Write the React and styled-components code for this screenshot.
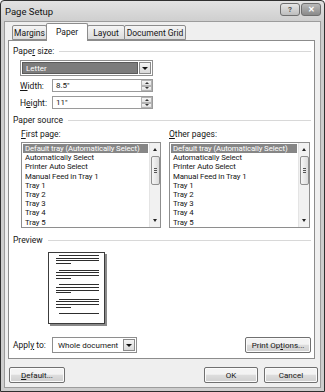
import React from 'react';
import styled, { createGlobalStyle } from 'styled-components';

const GlobalStyle = createGlobalStyle`
  html, body { margin: 0; padding: 0; background: #fff; }
  body {
    font-family: Roboto, "Liberation Sans", sans-serif;
    font-size: 8px;
    color: #151515;
  }
  * { box-sizing: border-box; }
`;

const Window = styled.div`
  width: 325px;
  height: 392px;
  border: 1px solid #2f2f2f;
  border-radius: 4px 4px 0 0;
  background: linear-gradient(#e2e2e2, #cdcdcd 22px, #cdcdcd);
  display: flex;
  flex-direction: column;
`;

const TitleBar = styled.div`
  height: 20px;
  display: flex;
  align-items: center;
  justify-content: space-between;
  padding: 0 3px 0 4px;
`;

const Title = styled.span`
  font-size: 9.5px;
  color: #111;
`;

const Caps = styled.div`
  display: flex;
  gap: 1px;
  margin-top: -3px;
`;

const CapBtn = styled.div`
  width: 20px;
  height: 13px;
  border: 1px solid #6f6f6f;
  border-radius: 3px;
  background: ${({ close }) =>
    close ? 'linear-gradient(#b9b9b9, #8a8a8a)' : 'linear-gradient(#e6e6e6, #bdbdbd)'};
  display: flex;
  align-items: center;
  justify-content: center;
  font-size: 8px;
  font-weight: 700;
  color: ${({ close }) => (close ? '#fff' : '#555')};
`;

const Client = styled.div`
  flex: 1;
  margin: 0 3px 3px 3px;
  border: 1px solid #9c9c9c;
  background: #efefef;
  padding: 1px 5px 0 3px;
  display: flex;
  flex-direction: column;
`;

const TabRow = styled.div`
  height: 17px;
  display: flex;
  align-items: flex-end;
  padding-left: 4px;
  position: relative;
  z-index: 1;
`;

const Tab = styled.div`
  width: ${({ w }) => w}px;
  height: ${({ active }) => (active ? 18 : 15)}px;
  margin-bottom: ${({ active }) => (active ? -1 : 0)}px;
  margin-left: ${({ first }) => (first ? 0 : -1)}px;
  border: 1px solid #8c8c8c;
  border-bottom: ${({ active }) => (active ? 'none' : '1px solid #8c8c8c')};
  border-radius: 2px 2px 0 0;
  background: ${({ active }) =>
    active ? '#fff' : 'linear-gradient(#f5f5f5, #dcdcdc)'};
  display: flex;
  align-items: center;
  justify-content: center;
  padding-bottom: ${({ active }) => (active ? 2 : 0)}px;
  font-size: 8.5px;
`;

const Panel = styled.div`
  height: 319px;
  border: 1px solid #8c8c8c;
  background: #fff;
  padding: 5px 3px 0 4px;
  display: flex;
  flex-direction: column;
`;

const SectionHead = styled.div`
  display: flex;
  align-items: center;
  gap: 5px;
  height: 10px;
  margin-top: ${({ mt }) => mt || 0}px;
  font-size: 8.5px;
  &::after {
    content: '';
    flex: 1;
    height: 1px;
    background: #d8d8d8;
  }
`;

const Indent = styled.div`
  padding-left: ${({ pl }) => pl}px;
  display: flex;
  flex-direction: column;
`;

const Combo = styled.div`
  width: ${({ w }) => w}px;
  height: 16px;
  margin-top: ${({ mt }) => mt || 0}px;
  border: 1px solid #8e8e8e;
  background: #fff;
  display: flex;
  padding: 1px;
`;

const ComboValue = styled.div`
  flex: 1;
  min-width: 0;
  display: flex;
  align-items: center;
  padding-left: 3px;
  font-size: 8px;
  white-space: nowrap;
  overflow: hidden;
  background: ${({ selected }) => (selected ? '#7c7c7c' : 'transparent')};
  color: ${({ selected }) => (selected ? '#fff' : '#151515')};
  border: 1px solid ${({ selected }) => (selected ? '#5a5a5a' : 'transparent')};
`;

const DropBtn = styled.div`
  width: 12px;
  margin-left: 1px;
  border: 1px solid #8a8a8a;
  background: linear-gradient(#f4f4f4, #d9d9d9);
  display: flex;
  align-items: center;
  justify-content: center;
  &::after {
    content: '';
    border-left: 3px solid transparent;
    border-right: 3px solid transparent;
    border-top: 3px solid #111;
  }
`;

const FieldRow = styled.div`
  display: flex;
  align-items: center;
  margin-top: ${({ mt }) => mt}px;
  height: 13px;
`;

const FieldLabel = styled.div`
  width: 32px;
  font-size: 8.5px;
`;

const Spin = styled.div`
  width: 101px;
  height: 13px;
  border: 1px solid #9a9a9a;
  display: flex;
  align-items: center;
  justify-content: space-between;
  padding-left: 3px;
  font-size: 8px;
`;

const SpinBtns = styled.div`
  width: 11px;
  height: 11px;
  display: flex;
  flex-direction: column;
`;

const SpinBtn = styled.div`
  flex: 1;
  border: 1px solid #b4b4b4;
  background: linear-gradient(#f6f6f6, #e0e0e0);
  display: flex;
  align-items: center;
  justify-content: center;
  &::after {
    content: '';
    border-left: 2px solid transparent;
    border-right: 2px solid transparent;
    ${({ down }) => (down ? 'border-top' : 'border-bottom')}: 2px solid #333;
  }
`;

const Columns = styled.div`
  display: flex;
  gap: 8px;
  padding-left: 8px;
  margin-top: 4px;
`;

const Column = styled.div`
  width: ${({ w }) => w}px;
  display: flex;
  flex-direction: column;
`;

const ColLabel = styled.div`
  height: 10px;
  font-size: 8.5px;
  display: flex;
  align-items: center;
`;

const ListBox = styled.div`
  height: 86px;
  margin-top: 3px;
  border: 1px solid #8e8e8e;
  display: flex;
  overflow: hidden;
`;

const Items = styled.div`
  flex: 1;
  min-width: 0;
  overflow: hidden;
  padding: 1px 1px 0 1px;
`;

const Item = styled.div`
  height: 9.2px;
  line-height: 9.2px;
  padding-left: 2px;
  font-size: 7.8px;
  letter-spacing: -0.1px;
  white-space: nowrap;
  background: ${({ selected }) => (selected ? '#868686' : 'transparent')};
  color: ${({ selected }) => (selected ? '#fff' : '#151515')};
`;

const ScrollBar = styled.div`
  width: 11px;
  flex: none;
  background: #f1f1f1;
  border-left: 1px solid #e4e4e4;
  display: flex;
  flex-direction: column;
  align-items: center;
  padding: 3px 0;
`;

const Arrow = styled.div`
  width: 0;
  height: 0;
  margin: 2px 0;
  border-left: 2px solid transparent;
  border-right: 2px solid transparent;
  ${({ down }) => (down ? 'border-top' : 'border-bottom')}: 3px solid #222;
`;

const Thumb = styled.div`
  width: 9px;
  height: 29px;
  margin-top: 3px;
  border: 1px solid #8f8f8f;
  border-radius: 2px;
  background: linear-gradient(90deg, #f6f6f6, #dcdcdc);
  display: flex;
  flex-direction: column;
  align-items: center;
  justify-content: center;
  gap: 1px;
  span {
    width: 3px;
    height: 1px;
    background: #555;
  }
`;

const Track = styled.div`
  flex: 1;
`;

const PagePreview = styled.div`
  width: 57px;
  height: 72px;
  margin: 7px 0 0 35px;
  border: 1px solid #3c3c3c;
  background: #fff;
  box-shadow: 2px 2px 0 #8a8a8a;
  padding: 2px 6px 0 7px;
  display: flex;
  flex-direction: column;
`;

const LineGroup = styled.div`
  display: flex;
  flex-direction: column;
  gap: 1.7px;
  margin-bottom: 5.5px;
`;

const TextLine = styled.div`
  height: 1px;
  background: #2d2d2d;
  width: ${({ w }) => w}px;
  margin-left: ${({ ml }) => ml || 0}px;
`;

const ApplyRow = styled.div`
  display: flex;
  align-items: center;
  justify-content: space-between;
  margin-top: 13px;
`;

const ApplyLeft = styled.div`
  display: flex;
  align-items: center;
`;

const ApplyLabel = styled.div`
  width: 39px;
  font-size: 8.5px;
`;

const Button = styled.div`
  width: ${({ w }) => w}px;
  height: 16px;
  border: 1px solid #707070;
  border-radius: 2px;
  background: linear-gradient(#f3f3f3 45%, #dddddd 50%, #cfcfcf);
  box-shadow: inset 0 0 0 1px #fbfbfb;
  display: flex;
  align-items: center;
  justify-content: center;
  font-size: 8px;
  white-space: nowrap;
`;

const Footer = styled.div`
  display: flex;
  align-items: center;
  padding: 8px 0 0 1px;
`;

const Spacer = styled.div`
  flex: 1;
`;

const FooterRight = styled.div`
  display: flex;
  gap: 6px;
  margin-right: -3px;
`;

const trays = [
  'Default tray (Automatically Select)',
  'Automatically Select',
  'Printer Auto Select',
  'Manual Feed in Tray 1',
  'Tray 1',
  'Tray 2',
  'Tray 3',
  'Tray 4',
  'Tray 5',
];

const TrayList = ({ label, w }) => (
  <Column w={w}>
    <ColLabel>{label}</ColLabel>
    <ListBox>
      <Items>
        {trays.map((t, i) => (
          <Item key={t} selected={i === 0}>
            {t}
          </Item>
        ))}
      </Items>
      <ScrollBar>
        <Arrow />
        <Thumb>
          <span />
          <span />
          <span />
        </Thumb>
        <Track />
        <Arrow down />
      </ScrollBar>
    </ListBox>
  </Column>
);

const Group = ({ last }) => (
  <LineGroup>
    <TextLine w={40} ml={3} />
    <TextLine w={43} />
    <TextLine w={43} />
    {!last && <TextLine w={15} />}
  </LineGroup>
);

const App = () => (
  <>
    <GlobalStyle />
    <Window>
      <TitleBar>
        <Title>Page Setup</Title>
        <Caps>
          <CapBtn>?</CapBtn>
          <CapBtn close>✕</CapBtn>
        </Caps>
      </TitleBar>
      <Client>
        <TabRow>
          <Tab w={35} first>Margins</Tab>
          <Tab w={42} active>Paper</Tab>
          <Tab w={38}>Layout</Tab>
          <Tab w={62}>Document Grid</Tab>
        </TabRow>
        <Panel>
          <SectionHead>
            <span>
              Pape<u>r</u> size:
            </span>
          </SectionHead>
          <Indent pl={7}>
            <Combo w={133} mt={4}>
              <ComboValue selected>Letter</ComboValue>
              <DropBtn />
            </Combo>
            <FieldRow mt={3}>
              <FieldLabel>
                <u>W</u>idth:
              </FieldLabel>
              <Spin>
                8.5"
                <SpinBtns>
                  <SpinBtn />
                  <SpinBtn down />
                </SpinBtns>
              </Spin>
            </FieldRow>
            <FieldRow mt={4}>
              <FieldLabel>
                H<u>e</u>ight:
              </FieldLabel>
              <Spin>
                11"
                <SpinBtns>
                  <SpinBtn />
                  <SpinBtn down />
                </SpinBtns>
              </Spin>
            </FieldRow>
          </Indent>
          <SectionHead mt={6}>
            <span>Paper source</span>
          </SectionHead>
          <Columns>
            <TrayList
              w={140}
              label={
                <span>
                  <u>F</u>irst page:
                </span>
              }
            />
            <TrayList
              w={141}
              label={
                <span>
                  <u>O</u>ther pages:
                </span>
              }
            />
          </Columns>
          <SectionHead mt={7}>
            <span>Preview</span>
          </SectionHead>
          <PagePreview>
            <Group />
            <Group />
            <Group />
            <Group />
            <TextLine w={40} ml={3} />
          </PagePreview>
          <ApplyRow>
            <ApplyLeft>
              <ApplyLabel>
                Appl<u>y</u> to:
              </ApplyLabel>
              <Combo w={85}>
                <ComboValue>Whole document</ComboValue>
                <DropBtn />
              </Combo>
            </ApplyLeft>
            <Button w={66}>
              <span>
                Print Op<u>t</u>ions...
              </span>
            </Button>
          </ApplyRow>
        </Panel>
        <Footer>
          <Button w={56}>
            <span>
              <u>D</u>efault...
            </span>
          </Button>
          <Spacer />
          <FooterRight>
            <Button w={54}>OK</Button>
            <Button w={54}>Cancel</Button>
          </FooterRight>
        </Footer>
      </Client>
    </Window>
  </>
);

export default App;
